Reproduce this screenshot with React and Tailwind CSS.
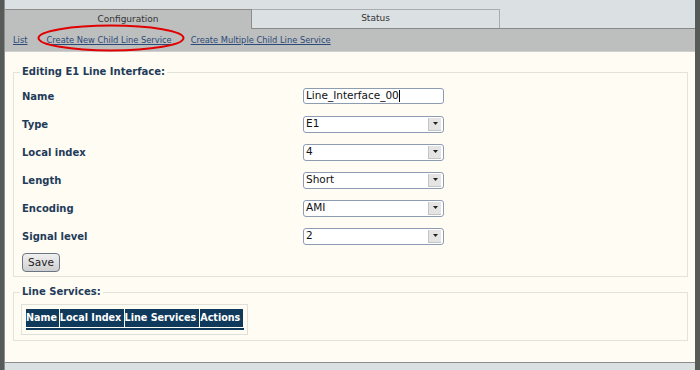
const FONT = { fontFamily: '"DejaVu Sans", Verdana, sans-serif' }

const FIELDS = [
  { label: 'Name',         value: 'Line_Interface_00', kind: 'input' },
  { label: 'Type',         value: 'E1' },
  { label: 'Local index',  value: '4' },
  { label: 'Length',       value: 'Short' },
  { label: 'Encoding',     value: 'AMI' },
  { label: 'Signal level', value: '2' },
]

const COLUMNS = [
  { label: 'Name',          w: 'w-[33px]' },
  { label: 'Local Index',   w: 'w-[64px]' },
  { label: 'Line Services', w: 'w-[75px]' },
  { label: 'Actions',       w: 'w-[43px]' },
]

function TextBox({ value }) {
  return (
    <div className="w-[141px] h-[16px] flex items-center border border-[#8d9cb0] rounded-[3px] bg-white pl-[2px] text-[10.5px] text-[#111]">
      <span>{value}</span>
      <span className="w-px h-[12px] bg-black" />
    </div>
  )
}

function SelectBox({ value }) {
  return (
    <div className="w-[141px] h-[17px] flex items-center justify-between border border-[#8d9cb0] rounded-[3px] bg-white pl-[2px] pr-[2px] text-[10.5px] text-[#111]">
      <span>{value}</span>
      <span className="w-[13px] h-[13px] flex items-center justify-center bg-[#e4e4e4] border-l border-b border-[#c4c4c4]">
        <svg width="5" height="3" viewBox="0 0 5 3">
          <path d="M0 0H5L2.5 3Z" fill="#222" />
        </svg>
      </span>
    </div>
  )
}

export default function App() {
  return (
    <div className="w-[700px] h-[370px] flex bg-[#575b57] overflow-hidden" style={FONT}>
      <div className="w-[4px] shrink-0" />
      <div className="w-[691px] flex flex-col border-l border-[#8f8f8f]">
        {/* ── Tabs ── */}
        <div className="h-[29px] shrink-0 flex items-end bg-[#dbe0e3] border-b border-[#8a8a8a] relative">
          <div className="w-[247px] h-[20px] -mb-px flex items-center justify-center bg-[#bdbebe] border-t border-r border-[#8c8c8c] text-[9px] text-[#333]">
            Configuration
          </div>
          <div className="w-[248px] h-[19px] flex items-center justify-center bg-[#dbe0e3] border-t border-r border-[#a9adb0] text-[9px] text-[#333]">
            Status
          </div>
        </div>

        {/* ── Sub nav ── */}
        <div className="h-[23px] shrink-0 flex items-center gap-[19px] pl-[8px] bg-[#bdbebe] border-b border-[#cfcfcf] text-[8.3px] text-[#2b4a78] relative">
          <a className="underline">List</a>
          <a className="underline">Create New Child Line Service</a>
          <a className="underline">Create Multiple Child Line Service</a>
          <svg className="absolute left-[30px] top-[-5px]" width="152" height="28" viewBox="0 0 152 28">
            <ellipse cx="76" cy="14" rx="72.5" ry="12.5" fill="none" stroke="#e00000" strokeWidth="2" />
          </svg>
        </div>

        {/* ── Content ── */}
        <div className="flex-1 bg-[#fffcf3] pt-[14px] pl-[8px] pr-[7px]">
          <fieldset className="border border-[#e4e3da] pl-[6px] pb-[4px]">
            <legend className="px-[2px] text-[10px] leading-[12px] font-bold text-[#1e3b5a]">
              Editing E1 Line Interface:
            </legend>
            <div className="pt-[4px] pl-[2px]">
              {FIELDS.map(f => (
                <div key={f.label} className="h-[28px] flex items-center">
                  <span className="w-[281px] text-[10px] font-bold text-[#1e3b5a]">{f.label}</span>
                  {f.kind === 'input' ? <TextBox value={f.value} /> : <SelectBox value={f.value} />}
                </div>
              ))}
              <button className="mt-[3px] w-[38px] h-[19px] flex items-center justify-center border border-[#6b7684] rounded-[4px] bg-gradient-to-b from-[#f0f0f0] to-[#cfcfcf] text-[10.5px] text-[#222]">
                Save
              </button>
            </div>
          </fieldset>

          <fieldset className="mt-[9px] border border-[#e4e3da] pl-[6px] pb-[5px]">
            <legend className="px-[2px] text-[10px] leading-[12px] font-bold text-[#1e3b5a]">
              Line Services:
            </legend>
            <div className="mt-[6px] ml-[1px] w-[227px] border border-[#e0e0d8] p-[4px]">
              <div className="flex gap-px">
                {COLUMNS.map(c => (
                  <div key={c.label} className={`${c.w} h-[18px] flex items-center bg-[#103a5c] text-white text-[9.6px] font-bold whitespace-nowrap overflow-hidden`}>
                    {c.label}
                  </div>
                ))}
              </div>
              <div className="mt-px h-[2px] w-[218px] bg-[#103a5c]" />
            </div>
          </fieldset>
        </div>

        {/* ── Footer ── */}
        <div className="h-[8px] shrink-0 bg-[#dbe0e3] border-t border-[#8c8c8c]" />
      </div>
      <div className="flex-1" />
    </div>
  )
}
